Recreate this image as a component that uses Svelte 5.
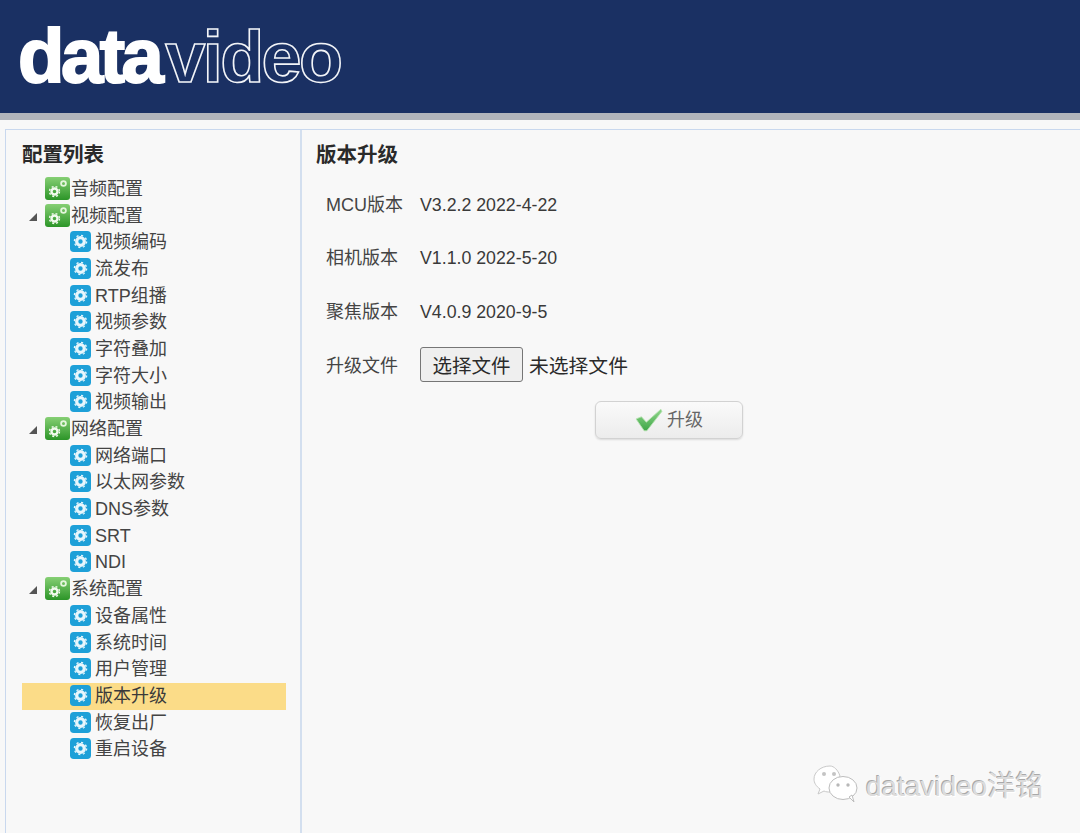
<script>
    const tree = [
        { label: "音频配置", level: 0 },
        { label: "视频配置", level: 0, open: true },
        { label: "视频编码", level: 1 },
        { label: "流发布", level: 1 },
        { label: "RTP组播", level: 1 },
        { label: "视频参数", level: 1 },
        { label: "字符叠加", level: 1 },
        { label: "字符大小", level: 1 },
        { label: "视频输出", level: 1 },
        { label: "网络配置", level: 0, open: true },
        { label: "网络端口", level: 1 },
        { label: "以太网参数", level: 1 },
        { label: "DNS参数", level: 1 },
        { label: "SRT", level: 1 },
        { label: "NDI", level: 1 },
        { label: "系统配置", level: 0, open: true },
        { label: "设备属性", level: 1 },
        { label: "系统时间", level: 1 },
        { label: "用户管理", level: 1 },
        { label: "版本升级", level: 1, active: true },
        { label: "恢复出厂", level: 1 },
        { label: "重启设备", level: 1 }
    ];

    const versions = [
        { name: "MCU版本", value: "V3.2.2 2022-4-22" },
        { name: "相机版本", value: "V1.1.0 2022-5-20" },
        { name: "聚焦版本", value: "V4.0.9 2020-9-5" }
    ];
</script>

<div class="page">
    <header class="banner">
        <div class="logo"><span class="solid">data</span><span class="outline">video</span></div>
    </header>
    <div class="strip"></div>

    <div class="panel">
        <aside class="sidebar">
            <h2>配置列表</h2>
            <ul class="tree">
                {#each tree as item}
                    <li class="row" class:child={item.level === 1} class:active={item.active}>
                        {#if item.open}
                            <span class="arrow"></span>
                        {/if}
                        {#if item.level === 0}
                            <svg class="icon" viewBox="0 0 25 23" aria-hidden="true">
                                <defs>
                                    <linearGradient id="green" x1="0" y1="0" x2="0" y2="1">
                                        <stop offset="0" stop-color="#86cf74" />
                                        <stop offset="1" stop-color="#2c9528" />
                                    </linearGradient>
                                </defs>
                                <rect width="25" height="23" rx="3" fill="url(#green)" />
                                <circle cx="9.5" cy="14.5" r="3" fill="none" stroke="#f2faee" stroke-width="2.4" />
                                <circle cx="9.5" cy="14.5" r="5" fill="none" stroke="#f2faee" stroke-width="1.4" stroke-dasharray="2 2" />
                                <circle cx="18.5" cy="6.5" r="2.4" fill="none" stroke="#e4f5dc" stroke-width="1.8" />
                            </svg>
                        {:else}
                            <svg class="icon" viewBox="0 0 22 22" aria-hidden="true">
                                <rect width="22" height="22" rx="4" fill="#1ea0d8" />
                                <circle cx="11" cy="11" r="4" fill="none" stroke="#e8f6fc" stroke-width="3.4" />
                                <circle cx="11" cy="11" r="6.4" fill="none" stroke="#e8f6fc" stroke-width="1.4" stroke-dasharray="2.2 2.8" />
                            </svg>
                        {/if}
                        <span class="label">{item.label}</span>
                    </li>
                {/each}
            </ul>
        </aside>

        <main class="content">
            <h2>版本升级</h2>
            <div class="fields">
                {#each versions as v}
                    <div class="field">
                        <span class="name">{v.name}</span>
                        <span class="value">{v.value}</span>
                    </div>
                {/each}
                <div class="field">
                    <span class="name">升级文件</span>
                    <button class="file-btn">选择文件</button>
                    <span class="no-file">未选择文件</span>
                </div>
            </div>
            <div class="actions">
                <button class="upgrade">
                    <svg class="check" viewBox="0 0 26 22" aria-hidden="true">
                        <defs>
                            <linearGradient id="tick" x1="0" y1="0" x2="0" y2="1">
                                <stop offset="0" stop-color="#8fd68a" />
                                <stop offset="1" stop-color="#3fa648" />
                            </linearGradient>
                        </defs>
                        <path d="M1 10 L6 8 L10.5 13 L24 1 L25 3 L11 21 L8.5 21 Z" fill="url(#tick)" stroke="#b6e2b0" stroke-width="0.8" />
                    </svg>
                    <span class="upgrade-text">升级</span>
                </button>
            </div>
        </main>
    </div>

    <div class="watermark">
        <svg class="wechat" viewBox="0 0 46 40" aria-hidden="true">
            <path d="M17 2 C8 2 1 8 1 15 C1 19 3 22 7 25 L5 30 L11 27 C13 28 15 28 17 28 L27 12 C25 6 21 2 17 2 Z" fill="#fff" stroke="#c9c9c9" />
            <ellipse cx="30" cy="24" rx="14" ry="11.5" fill="#fff" stroke="#bdbdbd" />
            <path d="M36 33 L41 38 L39 31 Z" fill="#fff" stroke="#bdbdbd" />
            <circle cx="11" cy="10" r="2" fill="#c4c4c4" />
            <circle cx="21" cy="10" r="2" fill="#c4c4c4" />
            <circle cx="25" cy="21" r="1.7" fill="#b8b8b8" />
            <circle cx="35" cy="21" r="1.7" fill="#b8b8b8" />
        </svg>
        <span>datavideo洋铭</span>
    </div>
</div>

<style>
    :global(body) {
        margin: 0;
        background: #f7f7f7;
    }

    .page {
        position: relative;
        width: 1080px;
        height: 833px;
        overflow: hidden;
        background: #f8f8f8;
        font-family: "Liberation Sans", "Noto Sans CJK SC", sans-serif;
        color: #333;
    }

    .banner {
        height: 113px;
        background: #1a3063;
        padding-left: 18px;
        box-sizing: border-box;
    }

    .logo {
        font-family: "Liberation Sans", sans-serif;
        font-weight: 700;
        line-height: 112px;
        white-space: nowrap;
        color: #fff;
    }

    .solid {
        font-size: 76px;
        letter-spacing: -3.5px;
        -webkit-text-stroke: 2px #fff;
    }

    .outline {
        color: #1a3063;
        -webkit-text-stroke: 1.6px #f2f4f8;
        margin-left: 5px;
        letter-spacing: -2.6px;
        font-size: 72px;
    }

    .strip {
        height: 7px;
        background: #b1b4bb;
    }

    .panel {
        display: flex;
        height: 704px;
        margin: 9px 0 0 5px;
        border-top: 1px solid #c9d8ee;
        border-left: 1px solid #c9d8ee;
    }

    .sidebar {
        width: 296px;
        flex: none;
        box-sizing: border-box;
        padding: 9px 14px 0 16px;
        border-right: 2px solid #d3dfef;
    }

    h2 {
        margin: 0;
        font-size: 20.5px;
        line-height: 28px;
        font-weight: 700;
        color: #2a2a2a;
        font-family: "Noto Sans CJK SC", sans-serif;
    }

    .tree {
        list-style: none;
        margin: 9px 0 0;
        padding: 0;
    }

    .row {
        position: relative;
        display: flex;
        align-items: center;
        box-sizing: border-box;
        height: 26.7px;
        padding: 0 0 2px 23px;
        gap: 1px;
        font-size: 18px;
        color: #444;
    }

    .row.child {
        padding-left: 48px;
        gap: 4px;
    }

    .row.active {
        background: #fbdc88;
        color: #3a3a3a;
    }

    .label {
        line-height: 20px;
        margin-top: 1px;
    }

    .arrow {
        position: absolute;
        left: 7px;
        top: 10px;
        width: 0;
        height: 0;
        border-style: solid;
        border-width: 0 0 8px 8px;
        border-color: transparent transparent #555 transparent;
    }

    .icon {
        width: 25px;
        height: 23px;
        flex: none;
    }

    .child .icon {
        width: 21px;
        height: 21px;
    }

    .content {
        flex: 1;
        padding: 9px 0 0 14px;
    }

    .fields {
        padding: 10px 0 0 10px;
    }

    .field {
        display: flex;
        align-items: center;
        height: 53.6px;
        font-size: 18px;
        color: #444;
    }

    .name {
        width: 94px;
        flex: none;
        line-height: 20px;
        margin-top: 2px;
    }

    .value {
        font-size: 17.75px;
        line-height: 20px;
        margin-top: 2px;
        color: #3a3a3a;
    }

    .file-btn {
        width: 103px;
        height: 35px;
        padding: 0;
        background: #efefef;
        border: 1px solid #767676;
        border-radius: 3px;
        font: inherit;
        font-size: 19.5px;
        color: #2a2a2a;
    }

    .no-file {
        margin-left: 6px;
        font-size: 19.8px;
        color: #2a2a2a;
    }

    .actions {
        margin: 10px 0 0 279px;
    }

    .upgrade {
        display: flex;
        align-items: center;
        justify-content: center;
        gap: 4px;
        width: 148px;
        height: 38px;
        padding: 0;
        background: linear-gradient(#fafafa, #ececec);
        border: 1px solid #d2d2d2;
        border-radius: 6px;
        box-shadow: 0 1px 2px rgba(0, 0, 0, 0.12);
        font: inherit;
        font-size: 18px;
        color: #666;
    }

    .upgrade-text {
        margin-bottom: 4px;
    }

    .check {
        width: 28px;
        height: 24px;
    }

    .watermark {
        position: absolute;
        left: 813px;
        top: 764px;
        display: flex;
        align-items: center;
        gap: 7px;
        font-size: 28px;
        color: #dcdcdc;
        text-shadow: -1px -1px 0 #a9a9a9, 1px 1px 0 #fff;
    }

    .wechat {
        width: 46px;
        height: 40px;
    }
</style>
